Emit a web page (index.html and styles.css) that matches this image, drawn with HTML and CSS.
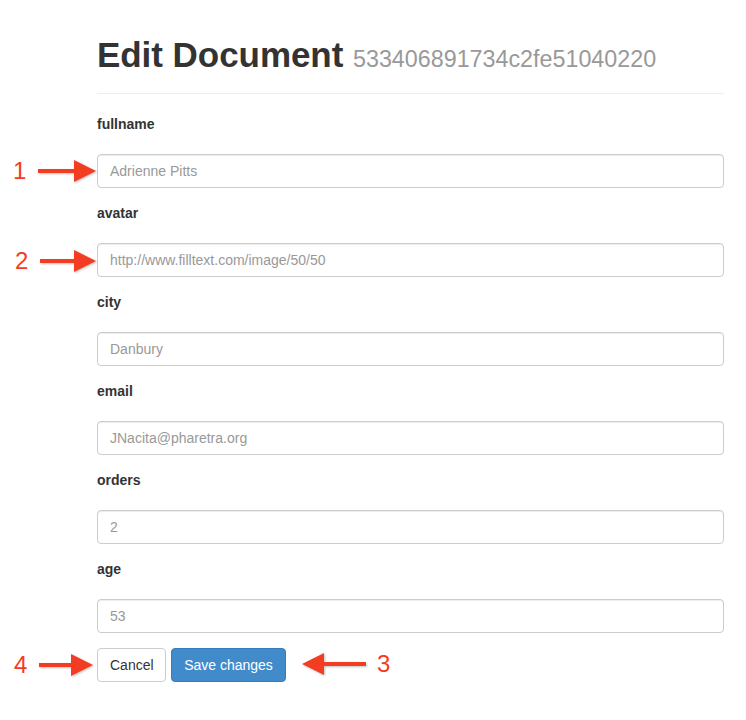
FILE: index.html
```html
<!DOCTYPE html>
<html>
<head>
<meta charset="utf-8">
<link rel="stylesheet" href="styles.css">
</head>
<body>
<div class="page">
  <div class="header">
    <h1 class="title">Edit Document <small class="doc-id">533406891734c2fe51040220</small></h1>
  </div>
  <form class="form">
    <div class="group">
      <label class="label">fullname</label>
      <input class="input" type="text" placeholder="Adrienne Pitts">
    </div>
    <div class="group">
      <label class="label">avatar</label>
      <input class="input" type="text" placeholder="http://www.filltext.com/image/50/50">
    </div>
    <div class="group">
      <label class="label">city</label>
      <input class="input" type="text" placeholder="Danbury">
    </div>
    <div class="group">
      <label class="label">email</label>
      <input class="input" type="text" placeholder="JNacita@pharetra.org">
    </div>
    <div class="group">
      <label class="label">orders</label>
      <input class="input" type="text" placeholder="2">
    </div>
    <div class="group">
      <label class="label">age</label>
      <input class="input" type="text" placeholder="53">
    </div>
    <div class="actions">
      <button type="button" class="btn btn-default">Cancel</button>
      <button type="button" class="btn btn-primary">Save changes</button>
    </div>
  </form>

  <div class="note note-1">
    <span class="num">1</span>
    <svg class="arrow" width="60" height="26" viewBox="0 0 60 26"><rect x="0" y="11" width="38" height="4" fill="#f33d22"/><polygon points="36,2 58,13 36,24" fill="#f33d22"/></svg>
  </div>
  <div class="note note-2">
    <span class="num">2</span>
    <svg class="arrow" width="58" height="26" viewBox="0 0 58 26"><rect x="0" y="11" width="36" height="4" fill="#f33d22"/><polygon points="34,2 56,13 34,24" fill="#f33d22"/></svg>
  </div>
  <div class="note note-4">
    <span class="num">4</span>
    <svg class="arrow" width="56" height="26" viewBox="0 0 56 26"><rect x="0" y="11" width="34" height="4" fill="#f33d22"/><polygon points="32,2 54,13 32,24" fill="#f33d22"/></svg>
  </div>
  <div class="note note-3">
    <svg class="arrow" width="68" height="26" viewBox="0 0 68 26"><polygon points="2,13 24,2 24,24" fill="#f33d22"/><rect x="22" y="11" width="44" height="4" fill="#f33d22"/></svg>
    <span class="num">3</span>
  </div>
</div>
</body>
</html>
```
FILE: styles.css
```css
* { box-sizing: border-box; }
html, body { margin: 0; padding: 0; background: #fff; }
body {
  font-family: "Liberation Sans", Arial, Helvetica, sans-serif;
  font-size: 14px;
  line-height: 20px;
  color: #333;
}
.page {
  position: relative;
  width: 746px;
  padding: 36px 22px 0 97px;
}
.header {
  border-bottom: 1px solid #eee;
  padding-bottom: 15px;
  margin-bottom: 20px;
}
.title {
  margin: 0;
  font-size: 35px;
  line-height: 38px;
  font-weight: bold;
  color: #333;
  letter-spacing: -0.05px;
}
.doc-id {
  font-size: 23.3px;
  font-weight: normal;
  color: #999;
  letter-spacing: 0;
}
.form { display: flex; flex-direction: column; }
.group {
  display: flex;
  flex-direction: column;
  margin-bottom: 15px;
}
.label {
  font-weight: bold;
  line-height: 20px;
  margin-bottom: 20px;
}
.input {
  height: 34px;
  width: 100%;
  padding: 6px 12px;
  font-family: inherit;
  font-size: 14px;
  color: #555;
  border: 1px solid #ccc;
  border-radius: 4px;
  background: #fff;
  box-shadow: inset 0 1px 1px rgba(0,0,0,0.075);
}
.input::placeholder { color: #999; opacity: 1; }
.actions {
  display: flex;
  gap: 5px;
}
.btn {
  height: 34px;
  padding: 6px 12px;
  font-family: inherit;
  font-size: 14px;
  line-height: 20px;
  border-radius: 4px;
  border: 1px solid #ccc;
  cursor: pointer;
}
.btn-default { background: #fff; color: #333; width: 69px; }
.btn-primary { background: #428bca; border-color: #357ebd; color: #fff; width: 115px; }

.note {
  position: absolute;
  display: flex;
  align-items: center;
  gap: 14px;
}
.num {
  font-size: 24px;
  line-height: 26px;
  color: #f33d22;
}
.arrow { display: block; filter: drop-shadow(1px 1px 1px rgba(0,0,0,0.25)); }
.note-1 { left: 13px; top: 158px; gap: 12px; }
.note-2 { left: 15px; top: 248px; gap: 12px; }
.note-4 { left: 14px; top: 652px; gap: 12px; }
.note-3 { left: 300px; top: 651px; gap: 9px; }
```
